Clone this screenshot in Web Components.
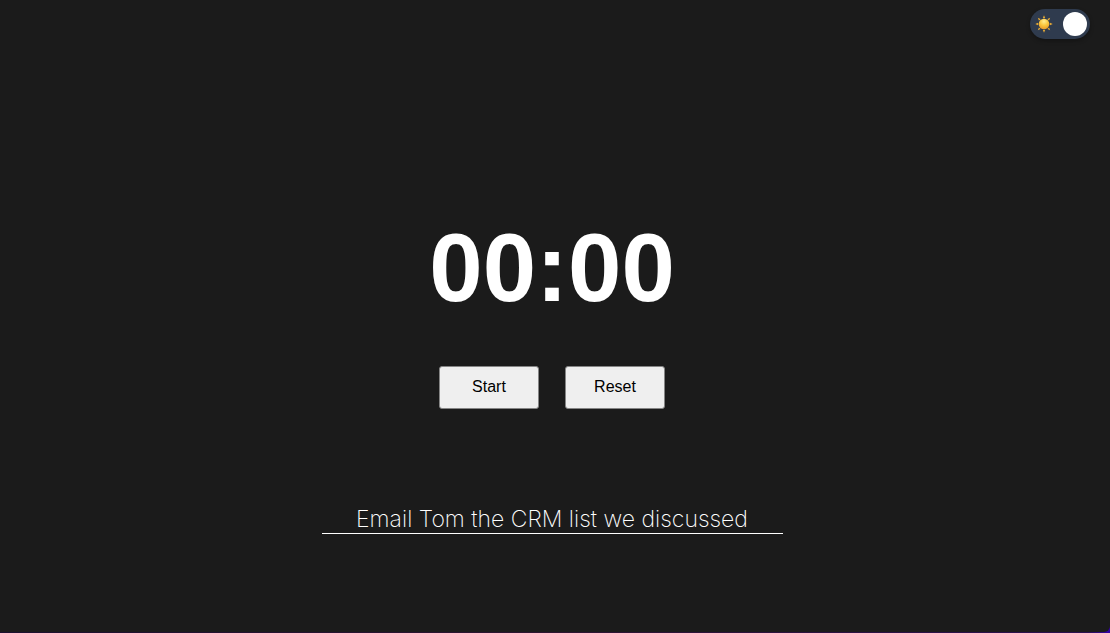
<!DOCTYPE html>
<html lang="en">
<head>
<meta charset="utf-8">
<meta name="viewport" content="width=device-width, initial-scale=1">
<title>Focus timer</title>
<style>
html { height: 100%; background: linear-gradient(90deg, #1c1030, #2c1430 50%, #2a1050 98%, #3200a8); }
body { margin: 0; height: 100%; }
</style>
</head>
<body>
<focus-app></focus-app>
<script>
const define = (name, html, setup) => {
  const template = document.createElement('template');
  template.innerHTML = html;
  customElements.define(name, class extends HTMLElement {
    constructor() {
      super();
      this.attachShadow({ mode: 'open' }).append(template.content.cloneNode(true));
      if (setup) setup(this);
    }
  });
};

define('theme-toggle', `
<style>
:host { display: block; }
label { display: flex; align-items: center; justify-content: space-between; box-sizing: border-box; width: 60px; height: 30px; padding: 3px 3px 3px 5px; border-radius: 15px; background: #2f3b4e; box-shadow: 0 2px 4px rgba(0,0,0,.3); cursor: pointer; }
svg { width: 18px; height: 18px; }
input { appearance: none; width: 24px; height: 24px; margin: 0; border-radius: 50%; background: #fff; cursor: pointer; }
</style>
<label>
  <svg viewBox="0 0 18 18" aria-hidden="true">
    <defs><radialGradient id="sun" cx=".5" cy=".25" r=".75"><stop offset="0" stop-color="#ffed91"/><stop offset=".5" stop-color="#fbc940"/><stop offset="1" stop-color="#e99a28"/></radialGradient></defs>
    <g fill="#e5a936">
      <path id="ray" d="M9 .3 L10.2 3 Q9 3.6 7.8 3Z"/>
      <use href="#ray" transform="rotate(45 9 9)"/><use href="#ray" transform="rotate(90 9 9)"/>
      <use href="#ray" transform="rotate(135 9 9)"/><use href="#ray" transform="rotate(180 9 9)"/>
      <use href="#ray" transform="rotate(225 9 9)"/><use href="#ray" transform="rotate(270 9 9)"/>
      <use href="#ray" transform="rotate(315 9 9)"/>
    </g>
    <circle cx="9" cy="9" r="5.3" fill="url(#sun)"/>
  </svg>
  <input type="checkbox" role="switch" aria-label="Dark theme" checked>
</label>`);

define('timer-display', `
<style>
:host { display: block; font: 700 96px/112px "Liberation Sans", Arial, sans-serif; color: #fff; }
</style>
<slot></slot>`);

define('timer-button', `
<style>
:host { display: block; }
button { display: block; box-sizing: border-box; width: 100px; height: 43px; padding: 0; border: 1px solid #858585; border-radius: 3px; background: #efefef; color: #000; font: 16px/20px "Liberation Sans", Arial, sans-serif; cursor: pointer; }
</style>
<button type="button"><slot></slot></button>`);

define('task-field', `
<style>
:host { display: block; width: 100%; max-width: 461px; }
input { display: block; box-sizing: border-box; width: 100%; height: 32px; padding: 3px 0 0; border: 0; border-bottom: 1px solid #fff; border-radius: 0; outline: 0; background: transparent; color: #fff; text-align: center; font: 200 23px/28px Inter, sans-serif; }
</style>
<input type="text" aria-label="Current task" value="Email Tom the CRM list we discussed">`);

define('focus-app', `
<style>
:host { display: flex; flex-direction: column; box-sizing: border-box; min-height: calc(100vh - 1px); padding: 9px 20px 0; border-radius: 0 0 6px 0; background: #1b1b1b; }
header { display: flex; justify-content: flex-end; }
main { flex: 1; display: flex; flex-direction: column; align-items: center; justify-content: center; padding: 74px 6px 0 0; }
.actions { display: flex; gap: 26px; margin: 42px 0 93px; }
</style>
<header><theme-toggle></theme-toggle></header>
<main>
  <timer-display role="timer">00:00</timer-display>
  <div class="actions"><timer-button>Start</timer-button><timer-button>Reset</timer-button></div>
  <task-field></task-field>
</main>`);
</script>
</body>
</html>
